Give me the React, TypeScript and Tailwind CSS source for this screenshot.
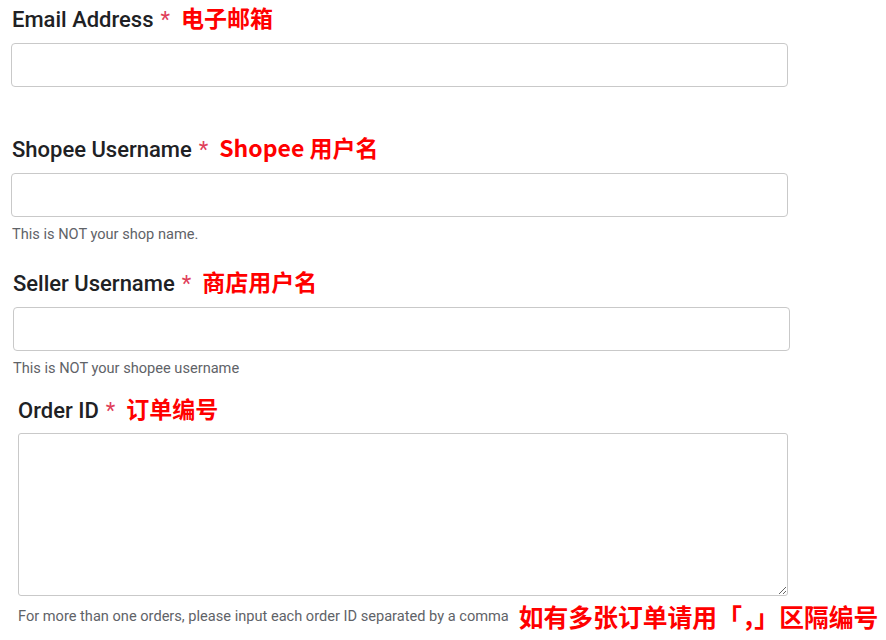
const labelFont = "font-['Roboto','Liberation_Sans',sans-serif]";
const cjk = "font-['Noto_Sans_CJK_SC','Liberation_Sans',sans-serif] font-bold text-[#ff0000]";

function Label({ text, note, className }: { text: string; note: string; className: string }) {
  return (
    <div className={`flex items-baseline h-[28px] ${className}`}>
      <span className={`${labelFont} text-[22px] font-medium text-[#202124] leading-[28px]`}>{text}</span>
      <span className={`${labelFont} text-[22px] text-[#e0405a] ml-[7px] leading-[28px]`}>*</span>
      <span className={`${cjk} text-[23px] ml-[11px] leading-[28px]`}>{note}</span>
    </div>
  );
}

function Helper({ text, className }: { text: string; className: string }) {
  return (
    <div className={`${labelFont} text-[14.6px] leading-[16px] text-[#5f6368] ${className}`}>{text}</div>
  );
}

export default function App() {
  const inputCls = 'block h-[44px] rounded-[4px] border border-[#c9c9c9] bg-white outline-none';
  return (
    <div className="w-[886px] h-[640px] bg-white pt-[3px] overflow-hidden">
      <Label text="Email Address" note="电子邮箱" className="ml-[12px]" />
      <input className={`${inputCls} mt-[12px] ml-[11px] w-[777px]`} />

      <Label text="Shopee Username" note="Shopee 用户名" className="ml-[12px] mt-[46px]" />
      <input className={`${inputCls} mt-[12px] ml-[11px] w-[777px]`} />
      <Helper text="This is NOT your shop name." className="ml-[12px] mt-[9px]" />

      <Label text="Seller Username" note="商店用户名" className="ml-[13px] mt-[25px]" />
      <input className={`${inputCls} mt-[12px] ml-[13px] w-[777px]`} />
      <Helper text="This is NOT your shopee username" className="ml-[13px] mt-[9px]" />

      <Label text="Order ID" note="订单编号" className="ml-[18px] mt-[18px]" />
      <textarea className="block mt-[11px] ml-[18px] w-[770px] h-[163px] rounded-[3px] border border-[#c9c9c9] bg-white outline-none" />

      <div className="flex items-center h-[28px] mt-[6px] ml-[18px]">
        <span className={`${labelFont} text-[14.6px] text-[#5f6368] mt-[2px]`}>
          For more than one orders, please input each order ID separated by a comma
        </span>
        <span className={`${cjk} text-[24.8px] ml-[10px] leading-[28px]`}>如有多张订单请用「，」区隔编号</span>
      </div>
    </div>
  );
}
